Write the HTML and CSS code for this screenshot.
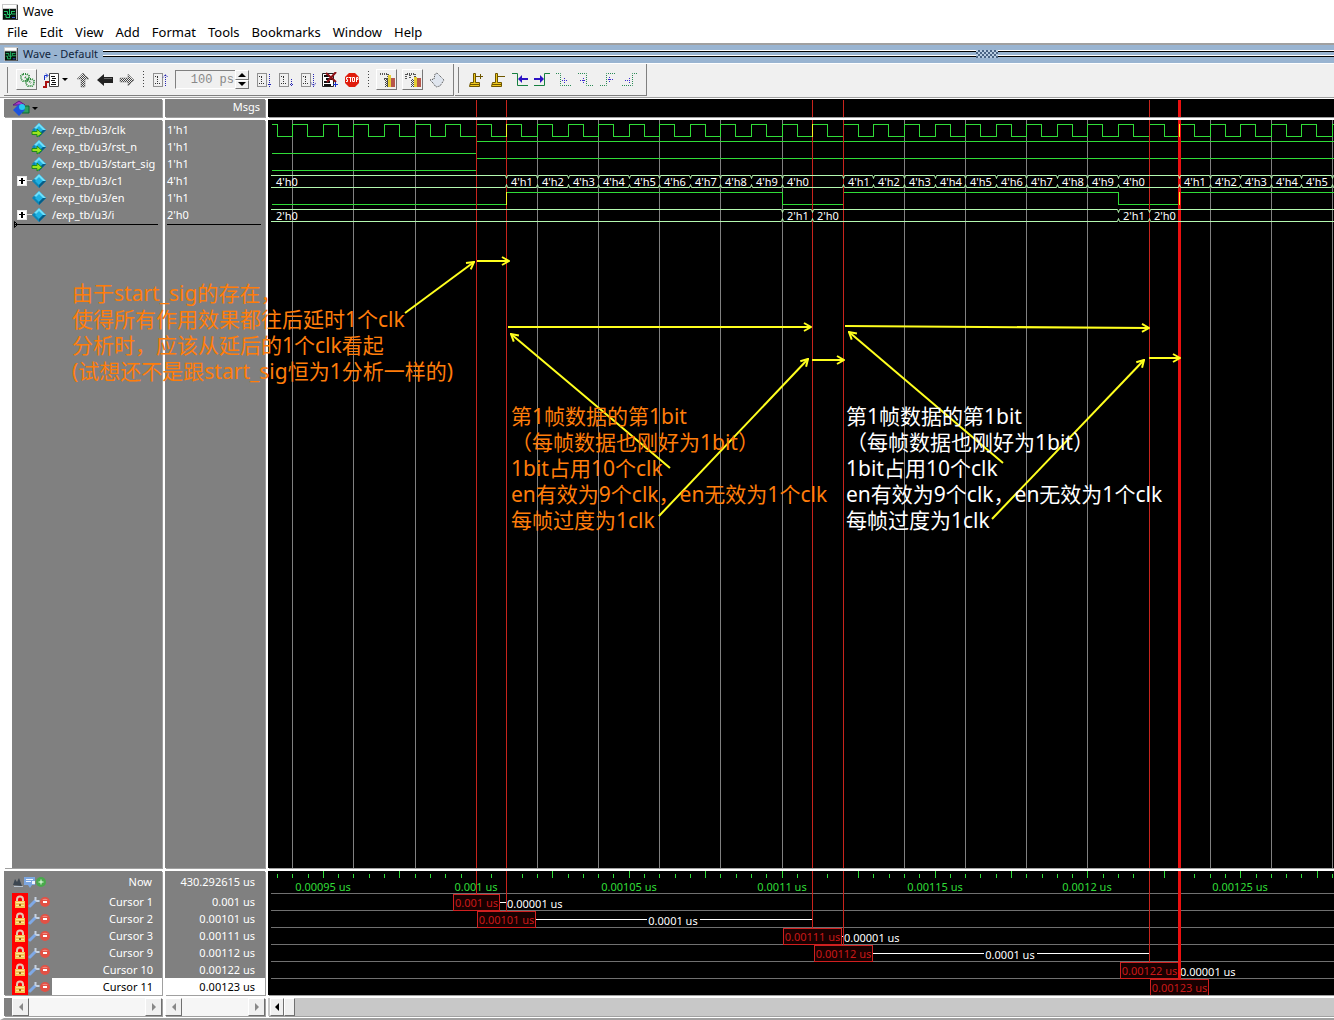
FILE: index.html
```html
<!DOCTYPE html>
<html lang="en">
<head>
<meta charset="utf-8">
<title>Wave</title>
<link rel="stylesheet" href="styles.css">
</head>
<body>
<svg class="defs" aria-hidden="true">
  <symbol id="wave-logo" viewBox="0 0 16 16">
    <path fill="#c8c8c8" d="M0 0h16v16H0z"/><path fill="#fff" d="M1 1h13v3H1z"/>
    <path fill="#06140c" d="M1 5h13v10H1z"/><path fill="#444" d="M15 1h1v15H1v-1h14z"/>
    <path fill="none" stroke="#25c46b" d="M2 7.500h3.500v3H9M2 10.500h2v3h3M7.500 5v9M9 7.500h4M9.500 7v3h4"/>
    <path fill="none" stroke="#3a57d8" d="M10 13.500h3"/>
  </symbol>
  <symbol id="diamond" viewBox="0 0 16 16">
    <path fill="#0a86b8" d="M8 1l7 7-7 7-7-7z"/><path fill="#6fe0fb" d="M8 1l7 7H8L3 6z"/>
    <path fill="#1fb1e2" d="M8 4l4 4-4 4-4-4z"/><path fill="#065c86" d="M15 8l-7 7v-3l4-4z"/>
  </symbol>
  <symbol id="arrow-in" viewBox="0 0 16 16">
    <path fill="#9be41c" stroke="#1f8a1c" d="M1 9.500h5V7l5 4.500L6 15v-2.500H1z"/>
  </symbol>
  <symbol id="shapes" viewBox="0 0 18 16">
    <path fill="#a63cc4" stroke="#5d1784" d="M7 1l6 4H1z"/><path fill="#2fa160" stroke="#0c6634" d="M10 6h7v7h-7z"/>
    <path fill="#1d54dd" d="M7 4l6 6-6 6-6-6z"/><circle cx="10" cy="7" r="3" fill="#27c8f2"/>
  </symbol>
  <symbol id="lock" viewBox="0 0 12 14">
    <path fill="none" stroke="#e5c9b4" stroke-width="2" d="M3 7V4.500a3 3 0 0 1 6 0V7"/>
    <rect x="1" y="6" width="10" height="7" rx="1" fill="#f5c552"/><path fill="#ffe69a" d="M2 7h8v1H2zM2 10h8v1H2z"/><path fill="#9c6518" d="M5 9h2v2H5z"/>
  </symbol>
  <symbol id="wrench" viewBox="0 0 12 12">
    <path fill="none" stroke="#7fa9e6" stroke-width="3" stroke-linecap="round" d="M2 10l5-5"/>
    <path fill="none" stroke="#c6d2e2" stroke-width="2" d="M7.500 1v3L9 5h2.500"/>
  </symbol>
  <symbol id="minus" viewBox="0 0 10 10"><circle cx="5" cy="5" r="5" fill="#e25145"/><path fill="#f08a80" d="M2 3a4 4 0 0 1 6 0z"/><path fill="#fff" d="M3 4h4v2H3z"/></symbol>
  <symbol id="plus" viewBox="0 0 10 10"><circle cx="5" cy="5" r="5" fill="#49a94b"/><path fill="#eaffea" d="M4.500 2.500h1v2h2v1h-2v2h-1v-2h-2v-1h2z"/></symbol>
  <symbol id="page-dots" viewBox="0 0 16 16">
    <path fill="none" stroke="#333" stroke-dasharray="1 1" d="M1.500 1.500h9v13h-9zM3 4.500h3M5.500 5v7M3 11.500h6"/>
  </symbol>
  <symbol id="dotted-arrow" viewBox="0 0 16 16">
    <path fill="url(#check)" d="M8 1l6 6h-4v8H6V7H2z"/><path fill="none" stroke="#777" stroke-dasharray="1 1" d="M8 1l6 6h-4v8H6V7H2z"/>
  </symbol>
  <pattern id="check" width="2" height="2" patternUnits="userSpaceOnUse"><path fill="#444" d="M0 0h1v1H0zM1 1h1v1H1z"/></pattern>
</svg>

<header class="titlebar"><svg class="i16"><use href="#wave-logo"/></svg><h1>Wave</h1></header>
<nav class="menu">
  <button>File</button><button>Edit</button><button>View</button><button>Add</button><button>Format</button><button>Tools</button><button>Bookmarks</button><button>Window</button><button>Help</button>
</nav>

<div class="dock-title"><svg class="i14"><use href="#wave-logo"/></svg><h2>Wave - Default</h2><span class="rails"></span><span class="grip"></span><span class="rails rails-end"></span></div>

<div class="toolbar">
  <div class="group">
    <button class="tool raised" aria-label="Link"><svg class="i16"><path fill="none" stroke="#2c8a3c" stroke-width="2" stroke-dasharray="1 1" d="M4 2h4l2 2v3L8 9H4L2 7V4zM9 7h4l2 2v3l-2 2H9l-2-2V9zM6 5l6 6"/></svg></button>
    <button class="tool wide" aria-label="Insert"><svg class="i16"><path fill="#fff" stroke="#444" d="M6.500 1.500h9v13h-9z"/><path stroke="#111" d="M8 4.500h4M9 6.500h4M8 8.500h4M9 10.500h4M8 12.500h5"/><path fill="none" stroke="#1330cc" d="M1.500 8V3.500h3M3 1.500l2 2-2 2"/><path fill="none" stroke="#a11" stroke-width="2" d="M0 15h3v-5h3"/></svg><i class="caret"></i></button>
    <button class="tool" aria-label="Up"><svg class="i16"><use href="#dotted-arrow"/></svg></button>
    <button class="tool" aria-label="Back"><svg class="i16"><path fill="#222" d="M0 8l7-6v3h9v6H7v3z"/><path fill="#666" d="M7 6h8v1H7z"/></svg></button>
    <button class="tool" aria-label="Forward"><svg class="i16"><g transform="rotate(90 8 8)"><use href="#dotted-arrow"/></g></svg></button>
    <i class="dots"></i>
    <button class="tool" aria-label="Restart"><svg class="i16"><use href="#page-dots"/><path fill="none" stroke="#2424b4" stroke-dasharray="1 1" d="M13.500 14V2M11 5.500l2.500-3 2.500 3"/></svg></button>
    <div class="run-length"><input type="text" value="100 ps" aria-label="Run length"><div class="spin"><button aria-label="Increase"><i class="up"></i></button><button aria-label="Decrease"><i class="down"></i></button></div></div>
    <button class="tool" aria-label="Run"><svg class="i16"><use href="#page-dots"/><path fill="none" stroke="#2424b4" stroke-dasharray="1 1" d="M13.500 2v13M12 12.500h4"/></svg></button>
    <button class="tool" aria-label="Continue"><svg class="i16"><use href="#page-dots"/><path fill="none" stroke="#2424b4" stroke-dasharray="1 1" d="M13.500 7v8M12 12.500h4"/></svg></button>
    <button class="tool" aria-label="Run all"><svg class="i16"><use href="#page-dots"/><path fill="none" stroke="#2424b4" stroke-dasharray="1 1" d="M13.500 2v13M11 10.500l2.500 4 2.500-4"/></svg></button>
    <button class="tool" aria-label="Break"><svg class="i16"><path fill="#fff" stroke="#222" d="M.5 1.500h11v13H.5z"/><path stroke="#111" stroke-width="2" d="M2 4h6M4 7h6M2 10h6M2 13h7"/><path stroke="#8d1016" stroke-width="2" d="M4 1l10 9M14 0L5 10"/><path fill="none" stroke="#1330cc" d="M13.500 10v5M11 12.500h5"/></svg></button>
    <button class="tool" aria-label="Stop"><svg class="i16"><path fill="#e01c0c" d="M5 1h6l4 4v6l-4 4H5l-4-4V5z"/><path fill="none" stroke="#fff" d="M4 5.500H2.500v2h1v2H2M4.500 5.500h3M6.500 5v5M8.500 5.500h2v4h-2zM12.500 10V5.500h1.500v2h-1.500"/></svg></button>
    <i class="dots"></i>
    <button class="tool raised" aria-label="Profile"><svg class="i16"><path fill="none" stroke="#555" stroke-width="2" stroke-dasharray="1 1" d="M1 2h8v5H4M8 7v7"/><path fill="url(#check)" d="M6 6h3v9H6z"/><path fill="#e6cf35" d="M9 3h3v12H9z"/><path fill="#b7574a" d="M12 6h4v9h-4z"/></svg></button>
    <button class="tool raised" aria-label="Memory profile"><svg class="i16"><path fill="none" stroke="#555" stroke-width="2" stroke-dasharray="1 1" d="M1 7V2h9v5M5 3v4"/><path fill="url(#check)" d="M6 7h3v8H6z"/><path fill="#e6cf35" d="M9 5h3v10H9z"/><path fill="#b7574a" d="M12 6h4v9h-4z"/></svg></button>
    <button class="tool" aria-label="Pan"><svg class="i16"><path fill="#dfe5ee" stroke="#444" stroke-dasharray="1 1" d="M1 8l4-1 1-5 2-1 3 3 4 4-4 6-4 1-3-4z"/></svg></button>
  </div>
  <div class="group cursors-tools">
    <button class="tool" aria-label="Insert cursor"><svg class="i16"><path fill="#f0c81c" stroke="#6d5500" d="M2.500 10.500h3v-9h2v9h4v4h-10z"/><path stroke="#6d5500" d="M8 4.500h7M12.500 2v5M2 12.500h9"/></svg></button>
    <button class="tool" aria-label="Delete cursor"><svg class="i16"><path fill="#f0c81c" stroke="#6d5500" d="M2.500 10.500h3v-9h2v9h4v4h-10z"/><path stroke="#6d5500" d="M8 4.500h7M2 12.500h9"/></svg></button>
    <button class="tool" aria-label="Previous transition"><svg class="i16"><path fill="none" stroke="#168040" d="M0 1.500h5.500v12H16"/><path fill="#2b12c4" d="M6 7l4-4v3h6v2h-6v3z"/></svg></button>
    <button class="tool" aria-label="Next transition"><svg class="i16"><path fill="none" stroke="#168040" d="M0 13.500h10.500v-12H16"/><path fill="#2b12c4" d="M10 7L6 3v3H0v2h6v3z"/></svg></button>
    <button class="tool" aria-label="Previous falling edge"><svg class="i16"><path fill="none" stroke="#2a8a55" stroke-dasharray="1 1" d="M0 1.500h4.500v12H16"/><path fill="none" stroke="#3a2ad0" stroke-dasharray="1 1" d="M6 8.500h5M8.500 6v6"/></svg></button>
    <button class="tool" aria-label="Next falling edge"><svg class="i16"><path fill="none" stroke="#2a8a55" stroke-dasharray="1 1" d="M0 1.500h8.500v12H16"/><path fill="none" stroke="#3a2ad0" stroke-dasharray="1 1" d="M2 8.500h5M5.500 6v5"/></svg></button>
    <button class="tool" aria-label="Previous rising edge"><svg class="i16"><path fill="none" stroke="#2a8a55" stroke-dasharray="1 1" d="M0 13.500h6.500v-12H16"/><path fill="none" stroke="#3a2ad0" stroke-dasharray="1 1" d="M8 7.500h5M9.500 5v5"/></svg></button>
    <button class="tool" aria-label="Next rising edge"><svg class="i16"><path fill="none" stroke="#2a8a55" stroke-dasharray="1 1" d="M0 13.500h10.500v-12H16"/><path fill="none" stroke="#3a2ad0" stroke-dasharray="1 1" d="M3 8.500h6M7.500 6v5"/></svg></button>
  </div>
</div>

<main class="workspace">
  <div class="cell head"><svg class="shapes"><use href="#shapes"/></svg><i class="caret"></i></div>
  <div class="cell head head-msgs">Msgs</div>
  <div class="cell plot"><svg id="plot-head"></svg></div>

  <div class="cell names">
    <ul>
      <li><span class="twig"></span><svg class="i16"><use href="#diamond"/><use href="#arrow-in"/></svg>/exp_tb/u3/clk</li>
      <li><span class="twig"></span><svg class="i16"><use href="#diamond"/><use href="#arrow-in"/></svg>/exp_tb/u3/rst_n</li>
      <li><span class="twig"></span><svg class="i16"><use href="#diamond"/><use href="#arrow-in"/></svg>/exp_tb/u3/start_sig</li>
      <li><span class="twig"><button class="expand" aria-label="Expand c1"></button></span><svg class="i16"><use href="#diamond"/></svg>/exp_tb/u3/c1</li>
      <li><span class="twig"></span><svg class="i16"><use href="#diamond"/></svg>/exp_tb/u3/en</li>
      <li><span class="twig"><button class="expand" aria-label="Expand i"></button></span><svg class="i16"><use href="#diamond"/></svg>/exp_tb/u3/i</li>
    </ul>
    <div class="insert-mark"><svg width="5" height="7"><path fill="none" stroke="#000" d="M.5.5l3 3-3 3z"/></svg></div>
  </div>
  <div class="cell values">
    <ul><li>1'h1</li><li>1'h1</li><li>1'h1</li><li>4'h1</li><li>1'h1</li><li>2'h0</li></ul>
    <div class="insert-mark"></div>
  </div>
  <div class="cell plot"><svg id="plot-body"></svg></div>

  <div class="cell cursors">
    <div class="now"><span class="now-icons"><svg width="12" height="12"><path fill="#3c4650" d="M1 9l2-6 2 3 2-4 3 8z"/><path fill="#b9c4cf" d="M2 10h9v1H2z"/></svg><svg width="12" height="12"><path fill="#7da7e0" d="M0 1h11v8H8l-2 3-2-3H0z"/><path fill="#eef5ff" d="M2 3h7v1H2zM2 5h5v1H2zM8 5h3v3H8z"/></svg><svg class="i10"><use href="#plus"/></svg></span><span>Now</span></div>
    <ul id="cursor-names"></ul>
  </div>
  <div class="cell cursor-values">
    <div class="now"><span>430.292615 us</span></div>
    <ul id="cursor-times"></ul>
  </div>
  <div class="cell plot"><svg id="plot-time"></svg></div>

  <div class="cell scroll scroll-names"><button aria-label="Scroll names left"><i class="left"></i></button><span class="track"></span><button aria-label="Scroll names right"><i class="right"></i></button></div>
  <div class="cell scroll"><button aria-label="Scroll values left"><i class="left"></i></button><span class="track"></span><button aria-label="Scroll values right"><i class="right"></i></button></div>
  <div class="cell scroll scroll-wave"><button aria-label="Scroll wave left"><i class="left"></i></button><button class="thumb" aria-label="Wave scroll position"></button></div>

  <div class="notes">
    <svg class="arrows">
      <defs><marker id="head" viewBox="0 0 10 12" refX="9" refY="6" markerWidth="10" markerHeight="12" markerUnits="userSpaceOnUse" orient="auto"><path fill="none" stroke="#ffff1e" stroke-width="2" d="M2 2l7 4-7 4"/></marker></defs>
      <path d="M405 215L474 164"/><path d="M477 163H509"/><path d="M508 229H811"/><path d="M670 370L511 236"/><path d="M659 418L808 261"/>
      <path d="M812 262H844"/><path d="M845 228L1149 230"/><path d="M1003 365L849 234"/><path d="M992 421L1144 262"/><path d="M1149 260H1180"/>
    </svg>
    <p class="note note-start">由于start_sig的存在，<br>使得所有作用效果都往后延时1个clk<br>分析时，应该从延后的1个clk看起<br>(试想还不是跟start_sig恒为1分析一样的)</p>
    <p class="note note-first">第1帧数据的第1bit<br>（每帧数据也刚好为1bit）<br>1bit占用10个clk<br>en有效为9个clk，en无效为1个clk<br>每帧过度为1clk</p>
    <p class="note note-second">第1帧数据的第1bit<br>（每帧数据也刚好为1bit）<br>1bit占用10个clk<br>en有效为9个clk，en无效为1个clk<br>每帧过度为1clk</p>
  </div>
</main>
<script src="wave.js"></script>
</body>
</html>
```
FILE: styles.css
```css
* { box-sizing: border-box; }
body {
  margin: 0; height: 100vh; display: flex; flex-direction: column; overflow: hidden;
  background: #fff; color: #000; font: 11px/17px "Noto Sans", "Noto Sans CJK SC", sans-serif;
}
button { margin: 0; padding: 0; border: 0; background: none; font: inherit; color: inherit; }
h1, h2, p, ul { margin: 0; padding: 0; font-weight: normal; }
ul { list-style: none; }
svg { display: block; flex: none; }
.defs { position: absolute; width: 0; height: 0; }
.i16 { width: 16px; height: 16px; }
.i14 { width: 14px; height: 14px; }
.i10 { width: 10px; height: 10px; }

.titlebar { display: flex; align-items: center; gap: 5px; height: 23px; padding-left: 2px; }
.titlebar h1 { font-size: 12px; }
.menu { display: flex; align-items: flex-start; gap: 12px; height: 20px; padding-left: 7px; font-size: 13px; line-height: 18px; }

.dock-title {
  display: flex; align-items: center; gap: 5px; height: 21px; padding-left: 4px;
  background: #99b4d1; border-top: 2px solid #a0a0a0; border-bottom: 1px solid #fff; color: #10243c;
}
.dock-title h2 { font-size: 11px; line-height: 15px; padding-bottom: 2px; }
.rails { flex: none; width: 873px; height: 6px; border-top: 1px solid #000; border-bottom: 1px solid #000; box-shadow: 0 -1px #fff, inset 0 -1px #fff; }
.rails-end { flex: 1; width: auto; margin-left: -5px; }
.grip { width: 22px; height: 8px; margin-left: -5px; background: repeating-conic-gradient(#4a6485 0 25%, #b9cde2 0 50%) 0 0 / 4px 4px; }

.toolbar { display: flex; gap: 1px; height: 34px; padding: 0 0 1px 4px; background: #f0f0f0; border-bottom: 1px solid #a0a0a0; }
.group { display: flex; align-items: center; padding: 0 5px 0 10px; border-right: 1px solid #808080; border-bottom: 1px solid #808080; }
.group::before { content: ""; align-self: stretch; width: 1px; margin: 3px 6px 2px -7px; background: #808080; }
.cursors-tools { padding-left: 10px; }
.tool { display: flex; align-items: center; justify-content: center; width: 22px; height: 22px; }
.raised { width: 21px; height: 21px; margin: 0 3px 0 2px; border: 1px solid #fff; border-right-color: #777; border-bottom-color: #777; }
.wide { width: 28px; gap: 3px; margin: 0 3px 0 1px; }
.caret { width: 0; border: 3px solid transparent; border-top-color: #000; border-bottom: 0; }
.dots { width: 1px; height: 17px; margin: 0 5px; background: repeating-linear-gradient(#444 0 1px, transparent 1px 3px); }
.run-length { display: flex; margin: 0 4px; height: 19px; }
.run-length input { width: 60px; padding: 0 1px; border: 1px solid #808080; border-right: 0; border-bottom-color: #fff; background: #f0f0f0; color: #888; font: 12px "Liberation Mono", monospace; text-align: right; }
.spin { display: flex; flex-direction: column; width: 14px; }
.spin button { flex: 1; display: flex; align-items: center; justify-content: center; border: 1px solid #fff; border-right-color: #777; border-bottom-color: #777; }
.up, .down, .left, .right { width: 0; height: 0; border: 4px solid transparent; }
.up { border-top: 0; border-bottom-color: #000; }
.down { border-bottom: 0; border-top-color: #000; }
.left { border-left: 0; border-right-color: #888; }
.right { border-right: 0; border-left-color: #888; }

.workspace {
  flex: 1; min-height: 0; position: relative; display: grid; gap: 3px;
  grid-template: 18px minmax(0, 1fr) 124px 18px / 158px 100px minmax(0, 1fr);
  padding: 1px 0 2px; border-left: 4px solid #fff; border-bottom: 2px solid #a0a0a0;
}
.cell { min-width: 0; background: #808080; color: #fff; box-shadow: 1px 1px #a0a0a0; overflow: hidden; }
.head { display: flex; align-items: center; gap: 2px; padding-left: 8px; }
.shapes { width: 18px; height: 16px; }
.head-msgs { justify-content: flex-end; align-items: flex-start; line-height: 16px; padding-right: 5px; }
.plot { background: #000; }
.plot svg { width: 100%; height: 100%; }

.names { border-left: 8px solid #fff; padding-top: 1px; }
.names li { display: flex; align-items: center; height: 17px; }
.names li svg { margin: 0 5px 0 -1px; }
.twig { width: 20px; height: 17px; display: flex; align-items: center; padding-left: 5px; }
.expand { width: 10px; height: 10px; border: 1px solid #e8e8e8; background: linear-gradient(#000, #000) center / 6px 1px no-repeat, linear-gradient(#000, #000) center / 2px 6px no-repeat, #fff; }
.twig:has(.expand)::after { content: ""; width: 5px; height: 1px; background: #d0d0d0; }
.values { padding: 1px 4px 0 2px; }
.insert-mark { height: 1px; margin-top: 1px; background: #000; }
.names .insert-mark { margin: 1px 4px 0 2px; display: flex; align-items: center; }

.now { display: flex; align-items: center; justify-content: space-between; height: 22px; padding-bottom: 1px; }
.now-icons { display: flex; align-items: center; }
.cursors .now { padding: 0 10px 1px 8px; }
.cursor-values .now { justify-content: flex-end; padding-right: 10px; }
.cursors li { display: flex; align-items: center; height: 17px; padding-left: 8px; }
.lock { display: flex; align-items: center; justify-content: center; width: 16px; height: 17px; background: #f00; }
.lock svg { width: 12px; height: 14px; }
.wrench { width: 12px; height: 12px; }
.label { flex: 1; margin-left: 2px; padding-right: 9px; text-align: right; }
.cursor-values li { height: 17px; padding-right: 10px; text-align: right; }
.selected .label, .cursor-values .selected { background: #fff; color: #000; }

.scroll { display: flex; }
.scroll-names { padding-left: 8px; }
.scroll button { display: flex; align-items: center; justify-content: center; width: 17px; background: #f0f0f0; border: 1px solid #fff; border-right-color: #707070; border-bottom-color: #707070; }
.track { flex: 1; background: #f6f6f6; }
.scroll-wave { background: #c8c8c8; padding-left: 2px; }
.scroll-wave button { width: 14px; }
.scroll-wave .thumb { width: 11px; }
.scroll-wave .left { border-right-color: #000; }

.notes { position: absolute; top: 0; bottom: 0; left: -4px; right: 0; pointer-events: none; }
.arrows { width: 100%; height: 100%; fill: none; stroke: #ffff1e; stroke-width: 2; }
.arrows > path { marker-end: url(#head); }
.note { position: absolute; font-size: 21px; line-height: 26px; white-space: nowrap; color: #ff7d0a; }
.note-start { left: 72px; top: 182px; }
.note-first { left: 511px; top: 305px; }
.note-second { left: 846px; top: 305px; color: #fff; }

.grid { stroke: #808080; }
.sig { stroke: #30dc38; fill: none; }
.bus { stroke: #b4f8b0; fill: none; }
.cur { stroke: #c8241c; }
.cur-active { stroke: #ea1010; stroke-width: 3; }
.hit { stroke: #ffee20; }
.bus-text, .delta { fill: #fff; }
.tick-text { fill: #30dc38; }
.rule { stroke: #707070; }
.span { stroke: #fff; }
.tag { fill: #180000; stroke: #d02020; }
.tag-text { fill: #c81818; }
svg text { font-size: 11px; }
svg line, svg rect, .sig { shape-rendering: crispEdges; }
```
FILE: wave.js
```js
// One clock period is 0.00001 us; n counts periods from 0.001 us.
const ORIGIN = 207.8, PERIOD = 30.58;
const X = n => Math.round(ORIGIN + n * PERIOD);
const EDGE = 3, END = 40;
const cursors = [
  { name: 'Cursor 1', time: '0.001 us', n: 0, w: 47 },
  { name: 'Cursor 2', time: '0.00101 us', n: 1, w: 59 },
  { name: 'Cursor 3', time: '0.00111 us', n: 11, w: 59 },
  { name: 'Cursor 9', time: '0.00112 us', n: 12, w: 59 },
  { name: 'Cursor 10', time: '0.00122 us', n: 22, w: 59 },
  { name: 'Cursor 11', time: '0.00123 us', n: 23, w: 59, active: true }
];
const deltas = ['0.00001 us', '0.0001 us', '0.00001 us', '0.0001 us', '0.00001 us'];

const line = (c, x1, y1, x2, y2) => `<line class="${c}" x1="${x1}" y1="${y1}" x2="${x2}" y2="${y2}"/>`;
const vline = (c, x, y1, y2) => line(c, x + 0.5, y1, x + 0.5, y2);
const hline = (c, y, x1, x2) => line(c, x1, y + 0.5, x2, y + 0.5);
const text = (c, x, y, s, anchor = 'start') => `<text class="${c}" x="${x}" y="${y}" text-anchor="${anchor}">${s}</text>`;
const cursorLine = (c, y1, y2) => vline(c.active ? 'cur-active' : 'cur', X(c.n), y1, y2);

document.getElementById('plot-head').innerHTML = cursors.map(c => cursorLine(c, 1, '100%')).join('');

function level(changes, start, high, low) {
  let v = start, d = `M${EDGE + 1} ${(v ? high : low) + 0.5}`;
  for (const x of changes) {
    d += `H${x + 0.5}`;
    v = !v;
    d += `V${(v ? high : low) + 0.5}`;
  }
  return `<path class="sig" d="${d}H3000"/>`;
}
function bus(segments, top) {
  const t = top + 0.5, b = top + 12.5;
  let out = '';
  segments.forEach(([n, value], i) => {
    const first = i === 0, last = i === segments.length - 1;
    const a = first ? EDGE : X(n), e = last ? 3000 : X(segments[i + 1][0]);
    let d = first ? `M${a} ${t}` : `M${a + 0.5} ${t + 3}L${a + 1.5} ${t}`;
    d += last ? `H${e}` : `H${e - 0.5}L${e + 0.5} ${t + 3}`;
    d += first ? `M${a} ${b}` : `M${a + 0.5} ${b - 3}L${a + 1.5} ${b}`;
    d += last ? `H${e}` : `H${e - 0.5}L${e + 0.5} ${b - 3}`;
    out += `<path class="bus" d="${d}"/>`;
    if (value) out += text('bus-text', a + 5, top + 11, value);
  });
  return out;
}

let body = '';
for (let n = -6; n < END; n += 2) body += vline('grid', X(n), 0, '100%');
const clk = [];
for (let n = -7; n < END; n++) { if (n > -7) clk.push(X(n)); clk.push(X(n) + 15); }
const count = [[-9, "4'h0"]], phase = [[-9, "2'h0"]];
for (let n = 1; n <= 9; n++) count.push([n, "4'h" + n]);
count.push([10, "4'h0"]);
for (let n = 12; n <= 20; n++) count.push([n, "4'h" + (n - 11)]);
count.push([21, "4'h0"]);
for (let n = 23; n <= 27; n++) count.push([n, "4'h" + (n - 22)]);
count.push([28, '']);
phase.push([10, "2'h1"], [11, "2'h0"], [21, "2'h1"], [22, "2'h0"]);

body += level(clk, true, 4, 16);
body += level([X(0)], false, 21, 33);
body += level([X(0)], false, 38, 50);
body += level([1, 10, 12, 21, 23].map(X), false, 72, 84);
body += cursors.map(c => cursorLine(c, 0, '100%')).join('');
for (const n of [1, 11, 23]) body += vline('hit', X(n), 4, 17);
for (const n of [1, 23]) body += vline('hit', X(n), 72, 85);
body += bus(count, 55) + bus(phase, 89);
document.getElementById('plot-body').innerHTML = body;

let time = '';
for (let k = -13; k < 80; k++) {
  const x = Math.round(ORIGIN + k * PERIOD / 2);
  time += vline('sig', x, k % 5 ? 3 : 0, 7);
}
['0.00095', '0.001', '0.00105', '0.0011', '0.00115', '0.0012', '0.00125'].forEach((t, i) => {
  time += text('tick-text', X(5 * (i - 1)), 20, t + ' us', 'middle');
});
cursors.forEach((c, i) => { time += hline('rule', 22 + 17 * i, EDGE, '100%'); });
cursors.forEach((c, i) => {
  const x = X(c.n), top = 23 + 17 * i, left = x - (c.w - 1) / 2, right = left + c.w, next = cursors[i + 1];
  time += cursorLine(c, 0, top);
  time += `<rect class="tag" x="${left + 0.5}" y="${top + 0.5}" width="${c.w - 1}" height="16"/>`;
  time += text('tag-text', left + c.w / 2, top + 13, c.time, 'middle');
  if (!next) return;
  const nx = X(next.n), y = top + 8;
  if (nx - x < 100) {
    time += hline('span', y, right, nx) + text('delta', nx + 1, top + 14, deltas[i]);
  } else {
    const mid = Math.round((right + nx) / 2) - 1;
    time += hline('span', y, right, mid - 26) + hline('span', y, mid + 27, nx) + text('delta', mid, top + 14, deltas[i], 'middle');
  }
});
document.getElementById('plot-time').innerHTML = time;

document.getElementById('cursor-names').innerHTML = cursors.map(c =>
  `<li class="${c.active ? 'selected' : ''}"><span class="lock"><svg><use href="#lock"/></svg></span><svg class="wrench"><use href="#wrench"/></svg><svg class="i10"><use href="#minus"/></svg><span class="label">${c.name}</span></li>`).join('');
document.getElementById('cursor-times').innerHTML = cursors.map(c =>
  `<li class="${c.active ? 'selected' : ''}">${c.time}</li>`).join('');
```
